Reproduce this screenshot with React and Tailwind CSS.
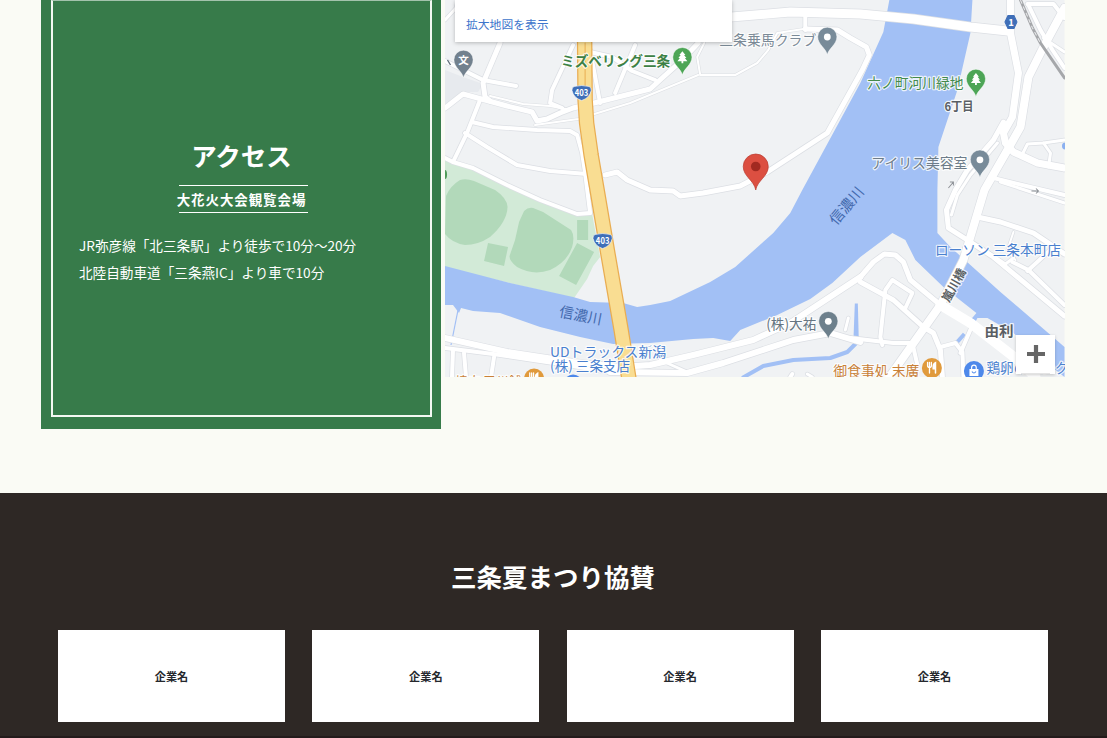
const JP = "font-['Noto_Sans_CJK_JP',sans-serif]";

const ROADS = [
  // [points, width]
  ["500,43 483,83 485,97 490,101", 5],
  ["445,61 483,80 516,86", 4],
  ["445,20 456,8 458,0", 3],
  ["445,108 449,105 463,94 507,106 532,112 537,121 547,119 560,113 573,108 590,104 650,89 662,78 682,60 698,43", 5],
  ["573,45 552,90 550,103 562,108", 4],
  ["480,100 467,133 453,162", 4],
  ["472,122 493,127 537,130 570,131 577,135 582,153 585,173 590,213", 4],
  ["465,133 487,147 517,165 550,171 587,174", 4],
  ["445,158 453,162 473,168 507,185 540,200 577,214 590,213", 4],
  ["605,175 617,172 627,180 650,190 673,191 680,196 703,193 740,186 767,172 827,133 862,70 869,55 866,47 850,38 837,30 805,29", 5],
  ["590,50 600,103", 4],
  ["635,45 615,93", 4],
  ["590,52 612,57 632,71 655,80", 4],
  ["805,14 805,30", 4],
  ["731,17 790,12 860,14 913,19 970,27 1007,31", 9],
  ["1010,0 1010,33 1018,73 1012,117 1003,133 1005,143 1013,152 1037,163 1064,168", 7],
  ["1064,8 1043,47 1028,77 1020,127 1007,150 984,190 963,260 940,305 889,377", 8],
  ["1003,122 993,140 967,170 955,190 946,210 948,228 967,240 993,257 1064,316", 5],
  ["997,143 970,175 957,195 951,215", 3],
  ["977,217 1000,222 1033,233 1064,254", 5],
  ["1053,247 1027,271", 4],
  ["1012,262 1028,270 1064,305", 4],
  ["1013,232 1007,250 1015,260", 2],
  ["987,252 1005,264 1013,258", 3],
  ["993,178 1030,187 1064,195", 4],
  ["1000,182 1064,203", 3],
  ["1022,154 1027,144 1043,143 1064,140", 3],
  ["1043,143 1050,153 1048,167", 3],
  ["1027,4 1053,4 1064,18", 4],
  ["1028,5 1040,30 1052,50 1064,68", 4],
  ["1043,38 1064,52", 3],
  ["860,277 873,262 884,254 895,255 903,262 910,280 940,305", 5],
  ["860,282 893,300 923,327 933,333 940,350 942,377", 5],
  ["882,345 880,337 885,290 892,280 912,293 905,308", 4],
  ["850,338 893,343 912,343 917,365", 4],
  ["940,347 955,343 962,352 963,377", 4],
  ["972,325 960,353", 4],
  ["445,338 507,352 573,362 620,367 650,365 693,355 753,340 790,323 860,277", 6],
  ["610,372 687,373 723,363 793,340 830,333 860,342", 6],
  ["445,348 493,354 560,364 610,372", 4],
  ["453,350 452,377", 4],
  ["464,353 466,377", 4],
  ["494,357 491,377", 4],
  ["687,372 660,360", 3],
  ["790,377 792,374", 4],
  ["807,374 812,377", 3],
  ["845,330 848,318", 3],
];

const THIN = [
  "490,96 523,104 550,106 570,110",
  "535,125 578,119 630,103 698,75",
  "704,43 697,57 700,75 735,75 757,63 768,50 777,33 803,29",
];

function Pin({ x, y, fill, children }) {
  return (
    <g transform={`translate(${x} ${y})`}>
      <path
        d="M0 17.8 C-1.2 11.5 -9.6 7.5 -9.6 -.2 A9.6 9.6 0 0 1 9.6 -.2 C9.6 7.5 1.2 11.5 0 17.8Z"
        fill={fill}
        stroke="#fff"
        strokeOpacity=".6"
        strokeWidth=".8"
      />
      {children}
    </g>
  );
}

const Tree = () => (
  <path d="M0-6 L3-2.3 H1.7 L4 .8 H2.5 L5 4 H.9 V6 H-.9 V4 H-5 L-2.5 .8 H-4 L-1.7-2.3 H-3Z" fill="#fff" />
);

const Fork = () => (
  <g stroke="#fff" strokeLinecap="round" fill="none">
    <path d="M-4.300-5.500v3.200q0 1.800 1.900 1.800t1.900-1.800v-3.200M-2.400-5.500v10.500" strokeWidth="1.300" />
    <path d="M3.600 5v-10.300q-2.300 1-2.300 4v2h2.300" strokeWidth="1.500" fill="#fff" />
  </g>
);

function Label({ x, y, w, size = 14, fill, weight = 400, transform, children }) {
  return (
    <text
      x={x}
      y={y}
      textLength={w}
      lengthAdjust="spacingAndGlyphs"
      fontSize={size}
      fontWeight={weight}
      fill={fill}
      stroke="#fff"
      strokeOpacity=".8"
      strokeWidth="2.4"
      strokeLinejoin="round"
      paintOrder="stroke"
      transform={transform}
    >
      {children}
    </text>
  );
}

function Shield({ x, y }) {
  return (
    <g transform={`translate(${x} ${y})`}>
      <path d="M-7.500-6 Q0-8 7.500-6 Q10-5 9.600-2 Q8 5.500 0 8 Q-8 5.500-9.600-2 Q-10-5-7.500-6Z" fill="#3f6fb8" stroke="#fff" strokeWidth=".6" />
      <text y="3" fontSize="9" fontWeight="700" fill="#fff" textAnchor="middle" textLength="13.500" lengthAdjust="spacingAndGlyphs">
        403
      </text>
    </g>
  );
}

function MapDrawing() {
  return (
    <svg viewBox="445 0 619 377" className={`block h-full w-full ${JP}`} preserveAspectRatio="none">
      <rect x="445" y="0" width="619" height="377" fill="#f0f2f4" />
      <path d="M445 70 L463 77 L483 84 L478 92 L463 92 L445 104Z" fill="#e7eaee" />
      <path d="M445 160 L475 169 L540 201 L577 215 L592 214 L600 257 L593 266 L587 279 L574 298 L445 268Z" fill="#d2ead7" />
      <g fill="#b2d9ba">
        <path d="M446 196 Q450 186 460 180 Q466 178 474 181 L495 190 Q507 198 507.500 207 Q507 222 490 237 Q478 245 465 245 Q452 243 445 234Z" />
        <path d="M524 211 Q528 207 533 208 L543 212 L571 230 Q575 236 572 247 Q567 262 550 270 Q533 276 517 267 Q509 261 509.500 256 L515 240 L519 222Z" />
        <path d="M577 220h11v20h-11zM488 243l20 4-4 19-20-5zM577 243l17 9-18 33-17-9z" />
      </g>
      <ellipse cx="445" cy="174.500" rx="2" ry="4.500" fill="#4e9a58" />
      <path
        d="M445 266 L510 283 L573 297 L590 302 L623 303 L637 307 L650 305 L670 301 L710 282 L735 267 L773 233 L790 213 L802 190 L860 83 L883 32 L889 0 H972 L970 33 L957 90 L938 147 L937 190 V233 L950 247 L1000 292 L1064 347 V377 L1040 358 L1013 333 L987 318 L977 318 L974 324 L970 320 L976 313 L943 287 L915 260 L905 240 L892 233 L860 257 L832 283 L810 299 L777 315 L740 330 L730 341 L713 338 L693 339 L650 343 L613 344 L580 337 L540 327 L500 313 L473 311 L461 308 L459 313 L453 305 H445Z"
        fill="#a2c0f5"
      />
      <g fill="none" stroke="#a2c0f5" strokeLinejoin="round">
        <path d="M742 378 L763 366 L793 360 L830 358 L847 352 L856 343" strokeWidth="4" />
        <path d="M458 310 L451 345" strokeWidth="1.200" />
        <path d="M955 344 L964 334" strokeWidth="4" />
      </g>
      <path d="M854.500 303.500h3l1 39-4.500 3-1-3z" fill="#a2c0f5" />
      <circle cx="1065" cy="146" r="3.500" fill="#8ab0f0" />
      <g fill="none" strokeLinejoin="round" strokeLinecap="round">
        {THIN.map((p) => <polyline key={p} points={p} stroke="#dcdfe3" strokeWidth="3.200" />)}
        {ROADS.map(([p, w]) => <polyline key={p} points={p} stroke="#dcdfe4" strokeWidth={w + 1.4} />)}
        {THIN.map((p) => <polyline key={p} points={p} stroke="#fff" strokeWidth="2" />)}
        {ROADS.map(([p, w]) => <polyline key={p} points={p} stroke="#fff" strokeWidth={w} />)}
        <polyline points="940,305 970,323 1015,358 1035,377" stroke="#fff" strokeWidth="10" />
        <polyline points="1020,0 1032,28 1040,43 1064,78" stroke="#a5a7aa" strokeWidth="3" />
        <polyline points="1020,0 1032,28 1040,43" stroke="#e9eaec" strokeWidth="1" strokeDasharray="4 3" strokeLinecap="butt" />
        <polyline points="584.500,40 585,100 586.500,123 591,155 597,190 608,255 621,330 629,380" stroke="#e9ad52" strokeWidth="15.500" />
        <polyline points="584.500,40 585,100 586.500,123 591,155 597,190 608,255 621,330 629,380" stroke="#f9dd92" strokeWidth="13" />
        <path d="M585 43 V86" stroke="#e9ad52" strokeWidth="1" />
      </g>
      <g stroke="#8d9196" strokeWidth="1" fill="none">
        <path d="M948 188l5-6m-3.500 0h3.500v3.500M1031 191h7m-2.500-2.500l2.500 2.500-2.500 2.500" />
      </g>

      <Shield x={581.500} y={92.500} />
      <Shield x={602.500} y={240.500} />
      <g transform="translate(1010.500 22)">
        <path d="M-3-6.500H3L6 0 3 6.500H-3L-6 0Z" fill="#3f6fb8" stroke="#3f6fb8" strokeLinejoin="round" />
        <text y="3.500" fontSize="9.500" fontWeight="700" fill="#fff" textAnchor="middle">1</text>
      </g>

      <path d="M447.500 60l3 5" stroke="#5d6b78" strokeWidth="1.300" />
      <Label x={719} y={45.500} w={97} fill="#7b8a97">三条乗馬クラブ</Label>
      <Label x={561} y={66} w={109} size={14} weight={700} fill="#3d8145">ミズベリング三条</Label>
      <Label x={867} y={88} w={96} fill="#438a4c">六ノ町河川緑地</Label>
      <Label x={944} y={111} w={29} size={12} weight={700} fill="#5a5f64">6丁目</Label>
      <Label x={871} y={168} w={96} fill="#6d7c89">アイリス美容室</Label>
      <Label x={934.500} y={255.500} w={126} size={14} fill="#4a80cf">ローソン 三条本町店</Label>
      <Label x={766} y={329.500} w={50} size={14} fill="#667582">(株)大祐</Label>
      <Label x={984} y={336} w={29} size={13.500} weight={700} fill="#5a5f64">由利</Label>
      <Label x={550} y={357} w={116} size={13.500} fill="#4a80cf">UDトラックス新潟</Label>
      <Label x={550} y={371} w={80} size={13.500} fill="#4a80cf">(株) 三条支店</Label>
      <Label x={833} y={376.500} w={86} size={14} fill="#c98138">御食事処 末廣</Label>
      <Label x={986} y={373.500} w={82} size={14} fill="#4a80cf">鶏卵のセンク</Label>
      <Label x={455} y={386} w={66} size={13} fill="#c98138">焼肉 三州舗</Label>
      <g fill="#4269ad" fontSize="14.500">
        <text x="0" y="0" textLength="43" lengthAdjust="spacingAndGlyphs" transform="translate(558.500 316.500) rotate(11)">信濃川</text>
        <text x="0" y="0" textLength="44" lengthAdjust="spacingAndGlyphs" transform="translate(836 226) rotate(-50)">信濃川</text>
      </g>
      <Label x={0} y={0} w={36} size={12} weight={700} fill="#5a5f64" transform="translate(948.500 303) rotate(-61)">嵐川橋</Label>

      <Pin x={463.500} y={60} fill="#72818e">
        <text y="3.800" fontSize="10.500" fontWeight="700" fill="#fff" textAnchor="middle">文</text>
      </Pin>
      <Pin x={682.200} y={57.300} fill="#4da556"><Tree /></Pin>
      <Pin x={975.500} y={79} fill="#4da556"><Tree /></Pin>
      <Pin x={827} y={37} fill="#788b99"><circle r="3.400" fill="#fff" /></Pin>
      <Pin x={979.500} y={159.800} fill="#788b99"><circle r="3.400" fill="#fff" /></Pin>
      <Pin x={828} y={321.300} fill="#6d808c"><circle r="3.400" fill="#fff" /></Pin>
      <g transform="translate(931.500 368)"><circle r="10" fill="#e09a3c" /><Fork /></g>
      <g transform="translate(534 378.500)"><circle r="10" fill="#e09a3c" /><Fork /></g>
      <circle cx="573" cy="384" r="9.500" fill="#4d88ea" />
      <g transform="translate(973.500 371)">
        <circle r="10" fill="#4d88ea" />
        <path d="M-4.500-2h9v7h-9z" fill="#fff" />
        <path d="M-2.300-2v-1.500a2.300 2.300 0 0 1 4.600 0V-2" fill="none" stroke="#fff" strokeWidth="1.200" />
        <path d="M-2 .5q2 3 4 0" fill="none" stroke="#4d88ea" strokeWidth="1.100" />
      </g>

      <g transform="translate(755.500 166.500)">
        <path d="M0 23.500 C-1.500 14 -12.500 10 -12.500 0 A12.500 12.500 0 0 1 12.500 0 C12.500 10 1.500 14 0 23.500Z" fill="#dc4f41" stroke="#b93a2e" strokeWidth=".7" />
        <circle r="4.800" fill="#a12a21" />
      </g>
    </svg>
  );
}

function Access() {
  return (
    <section className="flex h-[493px] gap-1 overflow-hidden bg-[#fafbf5] pl-[41px]">
      <div className="h-[428.500px] w-[400px] shrink-0 bg-[#377b4a] px-2.5 pb-3">
        <div className="flex h-full w-[381px] flex-col items-center border-2 border-t border-[#f4f8f3] border-t-[#a3c3ac] pt-[134px] text-white">
          <h2 className="text-[25.500px] leading-[40px] font-bold">アクセス</h2>
          <p className="mt-[10px] ml-[3px] h-7 w-[129px] border-y border-white text-center text-[13.500px] leading-[27px] font-bold tracking-[0.900px] whitespace-nowrap">
            <span className="-ml-[3px]">大花火大会観覧会場</span>
          </p>
          <div className="mt-[19px] w-full pl-[26px] text-[13.620px] leading-[27px] whitespace-nowrap">
            <p>JR弥彦線「北三条駅」より徒歩で10分〜20分</p>
            <p>北陸自動車道「三条燕IC」より車で10分</p>
          </div>
        </div>
      </div>
      <div className="relative h-[377px] w-[619.500px] shrink-0 overflow-hidden">
        <MapDrawing />
        <div className="absolute top-0 left-[10px] flex h-[42px] w-[276.500px] items-end bg-white pb-[9px] pl-[11px] shadow-[0_1px_4px_rgba(0,0,0,0.25)]">
          <a className="text-[11.800px] leading-[18px] text-[#3d75cc]">拡大地図を表示</a>
        </div>
        <button className="absolute top-[335px] left-[571px] flex h-[39px] w-[39px] flex-col items-center bg-white pt-[9.500px] shadow-[0_1px_3px_rgba(0,0,0,0.2)]">
          <svg viewBox="0 0 18 18" className="size-[18px]"><path d="M9 0v18M0 9h18" stroke="#666" strokeWidth="4.200" /></svg>
          <span className="mt-[10px] h-px w-[29px] bg-[#e3e3e3]" />
        </button>
      </div>
    </section>
  );
}

function Sponsors() {
  return (
    <section className="h-[245px] border-b-2 border-[#231b1b] bg-[#2e2825] pt-[63px]">
      <h2 className="-ml-px text-center text-[25.500px] leading-[40px] font-bold text-white">三条夏まつり協賛</h2>
      <div className="mt-[34px] ml-[58px] grid w-[990px] grid-cols-4 gap-x-[27.300px]">
        {[1, 2, 3, 4].map((n) => (
          <div key={n} className="flex h-[92px] items-center justify-center bg-white text-[11.200px] font-bold text-[#25282d]">
            企業名
          </div>
        ))}
      </div>
    </section>
  );
}

export default function App() {
  return (
    <main className="h-[738px] w-[1107px] overflow-hidden bg-[#fafbf5] font-['Noto_Sans_CJK_JP',sans-serif]">
      <Access />
      <Sponsors />
    </main>
  );
}
